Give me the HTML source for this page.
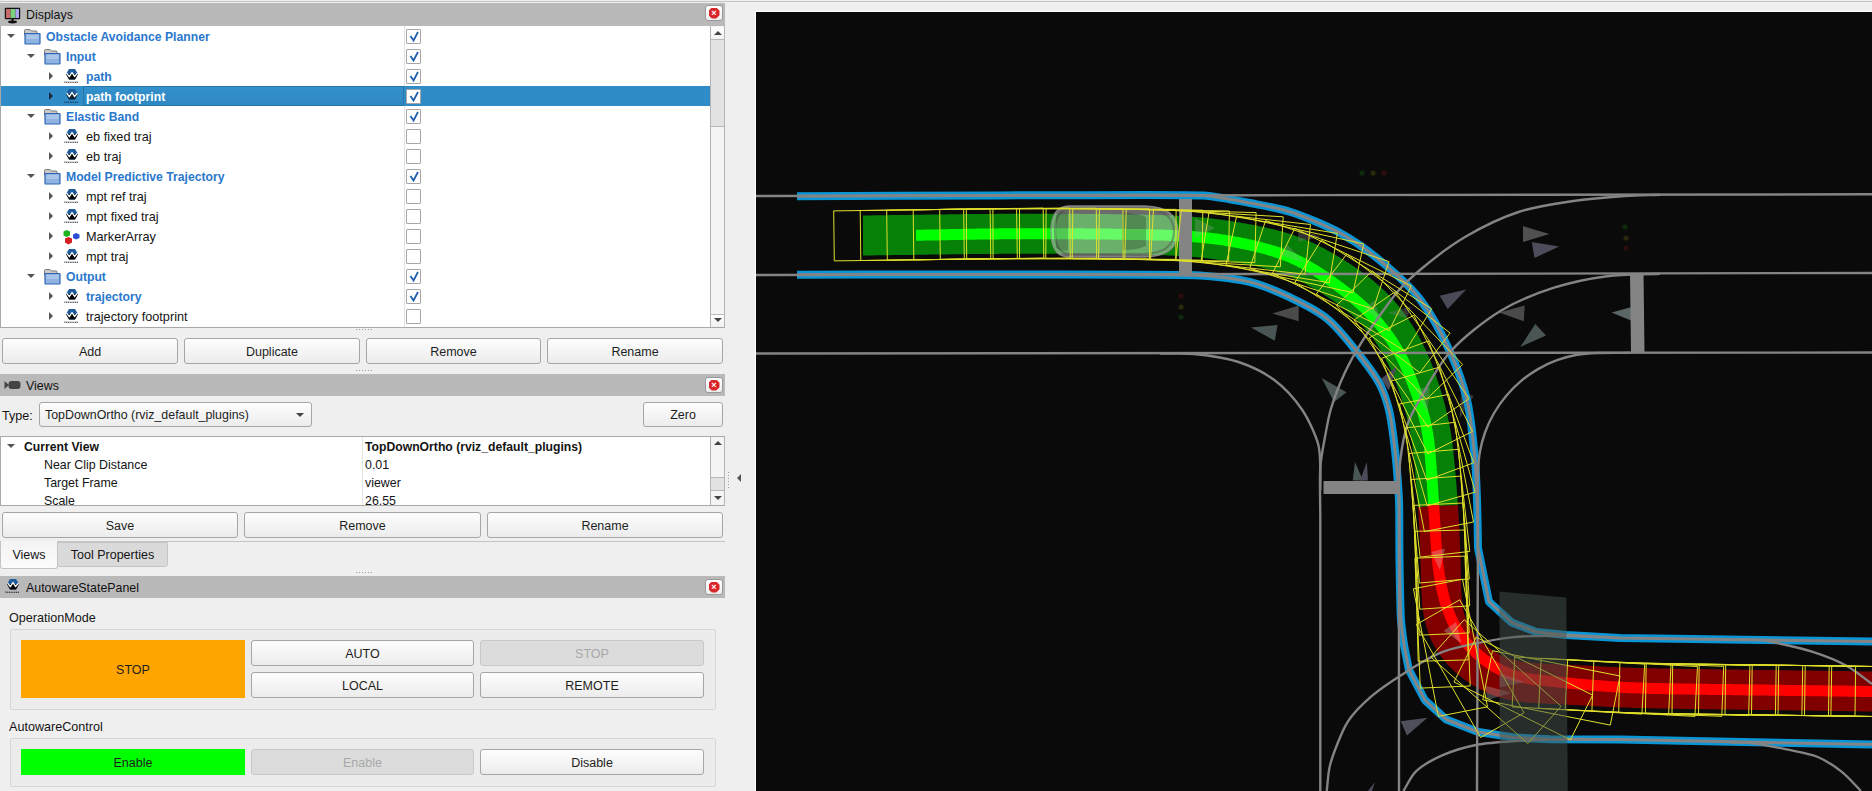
<!DOCTYPE html>
<html><head><meta charset="utf-8">
<style>
*{box-sizing:border-box;margin:0;padding:0}
html,body{width:1872px;height:791px;overflow:hidden;background:#efefef;font-family:"Liberation Sans",sans-serif;font-size:13px;color:#141414}
.a{position:absolute}
.hdr{position:absolute;left:0;width:725px;height:22px;background:#b9b9b9}
.hdr .t{position:absolute;left:26px;top:1px;line-height:22px;font-size:12.5px;color:#111}
.cls{position:absolute;left:705px;width:18px;height:16px;background:linear-gradient(#fff,#ededed);border:1px solid #9a9a9a;border-radius:3px}
.cls i{position:absolute;left:2.5px;top:1.5px;width:11px;height:11px;background:#d8262a;clip-path:polygon(30% 0,70% 0,100% 30%,100% 70%,70% 100%,30% 100%,0 70%,0 30%)}
.cls b{position:absolute;left:4.5px;top:3.5px;width:7px;height:7px;color:#fff;font-size:9px;line-height:7px;text-align:center;font-weight:bold}
.tree{position:absolute;background:#fff}
.row{position:absolute;left:1px;height:20px;width:709px}
.row .tx{position:absolute;top:0;line-height:20px;white-space:nowrap}
.bl{color:#2a78cd;font-weight:bold;font-size:12.2px}
.nm{color:#141414;font-size:12.7px}
.sel{background:#308cc6}
.sel .tx{color:#fff}
.exd{position:absolute;width:0;height:0;border-left:4px solid transparent;border-right:4px solid transparent;border-top:4px solid #555}
.exr{position:absolute;width:0;height:0;border-top:4px solid transparent;border-bottom:4px solid transparent;border-left:4px solid #555}
.cb{position:absolute;left:406px;width:15px;height:15px;background:#fff;border:1px solid #a6a6a6;border-radius:1px}
.btn{position:absolute;height:26px;border:1px solid #a6a6a6;border-radius:3px;background:linear-gradient(#fdfdfd,#ececec);text-align:center;line-height:26px;font-size:12.5px;color:#1e1e1e}
.dis{background:#dcdcdc;border-color:#c8c8c8;color:#a8a8a8}
</style></head><body>

<div class="a" style="left:0;top:1px;width:1872px;height:1px;background:#c4c4c4"></div>
<div class="hdr" style="top:3px;height:23px">
<svg class="a" style="left:4px;top:3.5px" width="17" height="17" viewBox="0 0 17 17"><rect x="0.8" y="0.8" width="15.4" height="11.4" rx="1" fill="#111"/><rect x="2" y="2" width="4.5" height="9" fill="#c86a6a"/><rect x="6.5" y="2" width="5" height="9" fill="#7ed07e"/><rect x="11.5" y="2" width="3.5" height="9" fill="#a8a8f0"/><rect x="7.5" y="12" width="2" height="2" fill="#111"/><ellipse cx="8.5" cy="15" rx="4.5" ry="1.4" fill="#111"/></svg>
<div class="t" style="top:1px;line-height:22px;font-size:12.4px">Displays</div>
</div>
<div class="cls" style="top:5px"><i></i><b>&#215;</b></div>
<div class="tree" style="left:0;top:26px;width:725px;height:302px;border-left:1px solid #a8a8a8;border-bottom:1px solid #a8a8a8"></div>
<div class="a" style="left:404px;top:26px;width:1px;height:301px;background:#e3e3e3"></div>
<div class="exd" style="left:7px;top:34px;border-top-color:#555"></div>
<svg class="a" style="left:24px;top:29px" width="17" height="16" viewBox="0 0 17 16"><path d="M0.5 1.5 Q0.5 0.5 1.5 0.5 H6 L7.5 2 H12 Q13 2 13 3 V6 H0.5Z" fill="#c9c9c9" stroke="#7a7a7a" stroke-width="1"/><path d="M1 4.5 H15.5 Q16 4.5 16 5 V14.5 Q16 15 15.5 15 H1.5 Q1 15 1 14.5Z" fill="#8fb3e0" stroke="#2f66b3" stroke-width="1.2"/><rect x="2.5" y="6" width="12" height="4" fill="#a9c6ea"/></svg>
<div class="a bl" style="left:46px;top:27px;line-height:20px;white-space:nowrap;">Obstacle Avoidance Planner</div>
<div class="cb" style="top:29px"></div>
<svg class="a" style="left:406.5px;top:28.5px" width="15" height="15" viewBox="0 0 15 15"><path d="M3.5 7 L6.5 11.5 L11 3" fill="none" stroke="#1f5fae" stroke-width="1.8"/></svg>
<div class="exd" style="left:27px;top:54px;border-top-color:#555"></div>
<svg class="a" style="left:44px;top:49px" width="17" height="16" viewBox="0 0 17 16"><path d="M0.5 1.5 Q0.5 0.5 1.5 0.5 H6 L7.5 2 H12 Q13 2 13 3 V6 H0.5Z" fill="#c9c9c9" stroke="#7a7a7a" stroke-width="1"/><path d="M1 4.5 H15.5 Q16 4.5 16 5 V14.5 Q16 15 15.5 15 H1.5 Q1 15 1 14.5Z" fill="#8fb3e0" stroke="#2f66b3" stroke-width="1.2"/><rect x="2.5" y="6" width="12" height="4" fill="#a9c6ea"/></svg>
<div class="a bl" style="left:66px;top:47px;line-height:20px;white-space:nowrap;">Input</div>
<div class="cb" style="top:49px"></div>
<svg class="a" style="left:406.5px;top:48.5px" width="15" height="15" viewBox="0 0 15 15"><path d="M3.5 7 L6.5 11.5 L11 3" fill="none" stroke="#1f5fae" stroke-width="1.8"/></svg>
<div class="exr" style="left:49px;top:72px;border-left-color:#555"></div>
<svg class="a" style="left:63px;top:69px" width="17" height="16" viewBox="0 0 17 16"><path d="M6 0 H12 L15 5 L12 10.5 H6 L3 5Z" fill="#1f5a9a"/><path d="M3 5 L15 5 L12 10.5 H6Z" fill="#000"/><path d="M3.6 4.2 L6.3 7.6 L9 3.6 L11.6 7.4 L14.4 4.2" fill="none" stroke="#fff" stroke-width="1.3"/><path d="M1.5 13.5 L2.5 12.2 M3 13.2 H15.5" stroke="#000" stroke-width="1.1" stroke-dasharray="1.2 0.6" opacity="0.85"/></svg>
<div class="a bl" style="left:86px;top:67px;line-height:20px;white-space:nowrap;">path</div>
<div class="cb" style="top:69px"></div>
<svg class="a" style="left:406.5px;top:68.5px" width="15" height="15" viewBox="0 0 15 15"><path d="M3.5 7 L6.5 11.5 L11 3" fill="none" stroke="#1f5fae" stroke-width="1.8"/></svg>
<div class="a" style="left:1px;top:86px;width:709px;height:20px;background:#308cc6"></div>
<div class="a" style="left:83px;top:86px;width:321px;height:20px;border:1px solid #2676ad;background:linear-gradient(#3491cc,#2d87c2)"></div>
<div class="exr" style="left:49px;top:92px;border-left-color:#1a2a3a"></div>
<svg class="a" style="left:63px;top:89px" width="17" height="16" viewBox="0 0 17 16"><path d="M6 0 H12 L15 5 L12 10.5 H6 L3 5Z" fill="#1f5a9a"/><path d="M3 5 L15 5 L12 10.5 H6Z" fill="#0d2236"/><path d="M3.6 4.2 L6.3 7.6 L9 3.6 L11.6 7.4 L14.4 4.2" fill="none" stroke="#fff" stroke-width="1.3"/><path d="M1.5 13.5 L2.5 12.2 M3 13.2 H15.5" stroke="#0d2236" stroke-width="1.1" stroke-dasharray="1.2 0.6" opacity="0.85"/></svg>
<div class="a bl" style="left:86px;top:87px;line-height:20px;white-space:nowrap;color:#fff;">path footprint</div>
<div class="cb" style="top:89px"></div>
<svg class="a" style="left:406.5px;top:88.5px" width="15" height="15" viewBox="0 0 15 15"><path d="M3.5 7 L6.5 11.5 L11 3" fill="none" stroke="#1f5fae" stroke-width="1.8"/></svg>
<div class="exd" style="left:27px;top:114px;border-top-color:#555"></div>
<svg class="a" style="left:44px;top:109px" width="17" height="16" viewBox="0 0 17 16"><path d="M0.5 1.5 Q0.5 0.5 1.5 0.5 H6 L7.5 2 H12 Q13 2 13 3 V6 H0.5Z" fill="#c9c9c9" stroke="#7a7a7a" stroke-width="1"/><path d="M1 4.5 H15.5 Q16 4.5 16 5 V14.5 Q16 15 15.5 15 H1.5 Q1 15 1 14.5Z" fill="#8fb3e0" stroke="#2f66b3" stroke-width="1.2"/><rect x="2.5" y="6" width="12" height="4" fill="#a9c6ea"/></svg>
<div class="a bl" style="left:66px;top:107px;line-height:20px;white-space:nowrap;">Elastic Band</div>
<div class="cb" style="top:109px"></div>
<svg class="a" style="left:406.5px;top:108.5px" width="15" height="15" viewBox="0 0 15 15"><path d="M3.5 7 L6.5 11.5 L11 3" fill="none" stroke="#1f5fae" stroke-width="1.8"/></svg>
<div class="exr" style="left:49px;top:132px;border-left-color:#555"></div>
<svg class="a" style="left:63px;top:129px" width="17" height="16" viewBox="0 0 17 16"><path d="M6 0 H12 L15 5 L12 10.5 H6 L3 5Z" fill="#1f5a9a"/><path d="M3 5 L15 5 L12 10.5 H6Z" fill="#000"/><path d="M3.6 4.2 L6.3 7.6 L9 3.6 L11.6 7.4 L14.4 4.2" fill="none" stroke="#fff" stroke-width="1.3"/><path d="M1.5 13.5 L2.5 12.2 M3 13.2 H15.5" stroke="#000" stroke-width="1.1" stroke-dasharray="1.2 0.6" opacity="0.85"/></svg>
<div class="a nm" style="left:86px;top:127px;line-height:20px;white-space:nowrap;">eb fixed traj</div>
<div class="cb" style="top:129px"></div>
<div class="exr" style="left:49px;top:152px;border-left-color:#555"></div>
<svg class="a" style="left:63px;top:149px" width="17" height="16" viewBox="0 0 17 16"><path d="M6 0 H12 L15 5 L12 10.5 H6 L3 5Z" fill="#1f5a9a"/><path d="M3 5 L15 5 L12 10.5 H6Z" fill="#000"/><path d="M3.6 4.2 L6.3 7.6 L9 3.6 L11.6 7.4 L14.4 4.2" fill="none" stroke="#fff" stroke-width="1.3"/><path d="M1.5 13.5 L2.5 12.2 M3 13.2 H15.5" stroke="#000" stroke-width="1.1" stroke-dasharray="1.2 0.6" opacity="0.85"/></svg>
<div class="a nm" style="left:86px;top:147px;line-height:20px;white-space:nowrap;">eb traj</div>
<div class="cb" style="top:149px"></div>
<div class="exd" style="left:27px;top:174px;border-top-color:#555"></div>
<svg class="a" style="left:44px;top:169px" width="17" height="16" viewBox="0 0 17 16"><path d="M0.5 1.5 Q0.5 0.5 1.5 0.5 H6 L7.5 2 H12 Q13 2 13 3 V6 H0.5Z" fill="#c9c9c9" stroke="#7a7a7a" stroke-width="1"/><path d="M1 4.5 H15.5 Q16 4.5 16 5 V14.5 Q16 15 15.5 15 H1.5 Q1 15 1 14.5Z" fill="#8fb3e0" stroke="#2f66b3" stroke-width="1.2"/><rect x="2.5" y="6" width="12" height="4" fill="#a9c6ea"/></svg>
<div class="a bl" style="left:66px;top:167px;line-height:20px;white-space:nowrap;">Model Predictive Trajectory</div>
<div class="cb" style="top:169px"></div>
<svg class="a" style="left:406.5px;top:168.5px" width="15" height="15" viewBox="0 0 15 15"><path d="M3.5 7 L6.5 11.5 L11 3" fill="none" stroke="#1f5fae" stroke-width="1.8"/></svg>
<div class="exr" style="left:49px;top:192px;border-left-color:#555"></div>
<svg class="a" style="left:63px;top:189px" width="17" height="16" viewBox="0 0 17 16"><path d="M6 0 H12 L15 5 L12 10.5 H6 L3 5Z" fill="#1f5a9a"/><path d="M3 5 L15 5 L12 10.5 H6Z" fill="#000"/><path d="M3.6 4.2 L6.3 7.6 L9 3.6 L11.6 7.4 L14.4 4.2" fill="none" stroke="#fff" stroke-width="1.3"/><path d="M1.5 13.5 L2.5 12.2 M3 13.2 H15.5" stroke="#000" stroke-width="1.1" stroke-dasharray="1.2 0.6" opacity="0.85"/></svg>
<div class="a nm" style="left:86px;top:187px;line-height:20px;white-space:nowrap;">mpt ref traj</div>
<div class="cb" style="top:189px"></div>
<div class="exr" style="left:49px;top:212px;border-left-color:#555"></div>
<svg class="a" style="left:63px;top:209px" width="17" height="16" viewBox="0 0 17 16"><path d="M6 0 H12 L15 5 L12 10.5 H6 L3 5Z" fill="#1f5a9a"/><path d="M3 5 L15 5 L12 10.5 H6Z" fill="#000"/><path d="M3.6 4.2 L6.3 7.6 L9 3.6 L11.6 7.4 L14.4 4.2" fill="none" stroke="#fff" stroke-width="1.3"/><path d="M1.5 13.5 L2.5 12.2 M3 13.2 H15.5" stroke="#000" stroke-width="1.1" stroke-dasharray="1.2 0.6" opacity="0.85"/></svg>
<div class="a nm" style="left:86px;top:207px;line-height:20px;white-space:nowrap;">mpt fixed traj</div>
<div class="cb" style="top:209px"></div>
<div class="exr" style="left:49px;top:232px;border-left-color:#555"></div>
<svg class="a" style="left:63px;top:229px" width="17" height="16" viewBox="0 0 17 16"><path d="M3.5 1 L7 2.5 V6.5 L3.5 8 L0.5 6.5 V2.5Z" fill="#1db31d"/><path d="M13 4 L16.5 5.5 V9 L13 10.5 L10 9 V5.5Z" fill="#2a4fd6"/><path d="M5.5 8 L9 9.5 V13.5 L5.5 15.5 L2 13.5 V9.5Z" fill="#d42020"/></svg>
<div class="a nm" style="left:86px;top:227px;line-height:20px;white-space:nowrap;">MarkerArray</div>
<div class="cb" style="top:229px"></div>
<div class="exr" style="left:49px;top:252px;border-left-color:#555"></div>
<svg class="a" style="left:63px;top:249px" width="17" height="16" viewBox="0 0 17 16"><path d="M6 0 H12 L15 5 L12 10.5 H6 L3 5Z" fill="#1f5a9a"/><path d="M3 5 L15 5 L12 10.5 H6Z" fill="#000"/><path d="M3.6 4.2 L6.3 7.6 L9 3.6 L11.6 7.4 L14.4 4.2" fill="none" stroke="#fff" stroke-width="1.3"/><path d="M1.5 13.5 L2.5 12.2 M3 13.2 H15.5" stroke="#000" stroke-width="1.1" stroke-dasharray="1.2 0.6" opacity="0.85"/></svg>
<div class="a nm" style="left:86px;top:247px;line-height:20px;white-space:nowrap;">mpt traj</div>
<div class="cb" style="top:249px"></div>
<div class="exd" style="left:27px;top:274px;border-top-color:#555"></div>
<svg class="a" style="left:44px;top:269px" width="17" height="16" viewBox="0 0 17 16"><path d="M0.5 1.5 Q0.5 0.5 1.5 0.5 H6 L7.5 2 H12 Q13 2 13 3 V6 H0.5Z" fill="#c9c9c9" stroke="#7a7a7a" stroke-width="1"/><path d="M1 4.5 H15.5 Q16 4.5 16 5 V14.5 Q16 15 15.5 15 H1.5 Q1 15 1 14.5Z" fill="#8fb3e0" stroke="#2f66b3" stroke-width="1.2"/><rect x="2.5" y="6" width="12" height="4" fill="#a9c6ea"/></svg>
<div class="a bl" style="left:66px;top:267px;line-height:20px;white-space:nowrap;">Output</div>
<div class="cb" style="top:269px"></div>
<svg class="a" style="left:406.5px;top:268.5px" width="15" height="15" viewBox="0 0 15 15"><path d="M3.5 7 L6.5 11.5 L11 3" fill="none" stroke="#1f5fae" stroke-width="1.8"/></svg>
<div class="exr" style="left:49px;top:292px;border-left-color:#555"></div>
<svg class="a" style="left:63px;top:289px" width="17" height="16" viewBox="0 0 17 16"><path d="M6 0 H12 L15 5 L12 10.5 H6 L3 5Z" fill="#1f5a9a"/><path d="M3 5 L15 5 L12 10.5 H6Z" fill="#000"/><path d="M3.6 4.2 L6.3 7.6 L9 3.6 L11.6 7.4 L14.4 4.2" fill="none" stroke="#fff" stroke-width="1.3"/><path d="M1.5 13.5 L2.5 12.2 M3 13.2 H15.5" stroke="#000" stroke-width="1.1" stroke-dasharray="1.2 0.6" opacity="0.85"/></svg>
<div class="a bl" style="left:86px;top:287px;line-height:20px;white-space:nowrap;">trajectory</div>
<div class="cb" style="top:289px"></div>
<svg class="a" style="left:406.5px;top:288.5px" width="15" height="15" viewBox="0 0 15 15"><path d="M3.5 7 L6.5 11.5 L11 3" fill="none" stroke="#1f5fae" stroke-width="1.8"/></svg>
<div class="exr" style="left:49px;top:312px;border-left-color:#555"></div>
<svg class="a" style="left:63px;top:309px" width="17" height="16" viewBox="0 0 17 16"><path d="M6 0 H12 L15 5 L12 10.5 H6 L3 5Z" fill="#1f5a9a"/><path d="M3 5 L15 5 L12 10.5 H6Z" fill="#000"/><path d="M3.6 4.2 L6.3 7.6 L9 3.6 L11.6 7.4 L14.4 4.2" fill="none" stroke="#fff" stroke-width="1.3"/><path d="M1.5 13.5 L2.5 12.2 M3 13.2 H15.5" stroke="#000" stroke-width="1.1" stroke-dasharray="1.2 0.6" opacity="0.85"/></svg>
<div class="a nm" style="left:86px;top:307px;line-height:20px;white-space:nowrap;">trajectory footprint</div>
<div class="cb" style="top:309px"></div>
<div class="a" style="left:710px;top:26px;width:15px;height:301px;background:#f4f4f4;border-left:1px solid #b4b4b4;border-right:1px solid #b4b4b4"></div>
<div class="a" style="left:711px;top:27px;width:13px;height:13px;background:linear-gradient(#fff,#f0f0f0)"></div>
<div class="a" style="left:714px;top:31px;width:0;height:0;border-left:4px solid transparent;border-right:4px solid transparent;border-bottom:4px solid #444"></div>
<div class="a" style="left:711px;top:39px;width:13px;height:88px;background:#e2e2e2;border-top:1px solid #b8b8b8;border-bottom:1px solid #b8b8b8"></div>
<div class="a" style="left:711px;top:314px;width:13px;height:13px;background:linear-gradient(#fff,#f0f0f0);border-top:1px solid #b8b8b8"></div>
<div class="a" style="left:714px;top:318px;width:0;height:0;border-left:4px solid transparent;border-right:4px solid transparent;border-top:4px solid #444"></div>
<div class="btn" style="left:2px;top:338px;width:176px">Add</div>
<div class="btn" style="left:184px;top:338px;width:176px">Duplicate</div>
<div class="btn" style="left:366px;top:338px;width:175px">Remove</div>
<div class="btn" style="left:547px;top:338px;width:176px">Rename</div>
<div class="hdr" style="top:374px;height:22px">
<svg class="a" style="left:4px;top:6px" width="17" height="10" viewBox="0 0 17 10"><path d="M0.5 1 L5 5 L0.5 9Z" fill="#444"/><rect x="4.5" y="1" width="12" height="8" rx="3" fill="#444"/></svg>
<div class="t" style="font-size:12.4px">Views</div>
</div>
<div class="cls" style="top:377px"><i></i><b>&#215;</b></div>
<div class="a" style="left:2px;top:406px;line-height:20px;font-size:12.6px">Type:</div>
<div class="btn" style="left:39px;top:402px;width:273px;height:25px;text-align:left;padding-left:5px;font-size:12.4px;line-height:25px">TopDownOrtho (rviz_default_plugins)</div>
<div class="a" style="left:296px;top:413px;width:0;height:0;border-left:4px solid transparent;border-right:4px solid transparent;border-top:4px solid #444"></div>
<div class="btn" style="left:643px;top:402px;width:80px;height:25px;line-height:25px">Zero</div>
<div class="tree" style="left:0;top:436px;width:725px;height:70px;border:1px solid #a8a8a8;border-right:none"></div>
<div class="a" style="left:362px;top:437px;width:1px;height:68px;background:#e3e3e3"></div>
<div class="a" style="left:24px;top:438px;line-height:18px;white-space:nowrap;font-weight:bold;font-size:12.2px;">Current View</div>
<div class="a" style="left:365px;top:438px;line-height:18px;white-space:nowrap;font-weight:bold;font-size:12.2px;">TopDownOrtho (rviz_default_plugins)</div>
<div class="a" style="left:44px;top:456px;line-height:18px;white-space:nowrap;font-size:12.4px;">Near Clip Distance</div>
<div class="a" style="left:365px;top:456px;line-height:18px;white-space:nowrap;font-size:12.4px;">0.01</div>
<div class="a" style="left:44px;top:474px;line-height:18px;white-space:nowrap;font-size:12.4px;">Target Frame</div>
<div class="a" style="left:365px;top:474px;line-height:18px;white-space:nowrap;font-size:12.4px;">viewer</div>
<div class="a" style="left:44px;top:492px;line-height:18px;white-space:nowrap;font-size:12.4px;">Scale</div>
<div class="a" style="left:365px;top:492px;line-height:18px;white-space:nowrap;font-size:12.4px;">26.55</div>
<div class="exd" style="left:7px;top:444px"></div>
<div class="a" style="left:0;top:506px;width:725px;height:6px;background:#efefef"></div>
<div class="a" style="left:0;top:505px;width:725px;height:1px;background:#a8a8a8"></div>
<div class="a" style="left:710px;top:437px;width:15px;height:68px;background:#f4f4f4;border-left:1px solid #b4b4b4;border-right:1px solid #b4b4b4"></div>
<div class="a" style="left:714px;top:441px;width:0;height:0;border-left:4px solid transparent;border-right:4px solid transparent;border-bottom:4px solid #444"></div>
<div class="a" style="left:711px;top:477px;width:13px;height:14px;background:#e2e2e2;border-top:1px solid #b8b8b8;border-bottom:1px solid #b8b8b8"></div>
<div class="a" style="left:714px;top:496px;width:0;height:0;border-left:4px solid transparent;border-right:4px solid transparent;border-top:4px solid #444"></div>
<div class="btn" style="left:2px;top:512px;width:236px">Save</div>
<div class="btn" style="left:244px;top:512px;width:237px">Remove</div>
<div class="btn" style="left:487px;top:512px;width:236px">Rename</div>
<div class="a" style="left:57px;top:541px;width:668px;height:1px;background:#c4c4c4"></div>
<div class="a" style="left:57px;top:542px;width:111px;height:25px;background:#dadada;border:1px solid #c4c4c4;border-radius:0 0 3px 3px;line-height:24px;text-align:center;font-size:12.5px">Tool Properties</div>
<div class="a" style="left:0;top:541px;width:58px;height:28px;background:linear-gradient(#f4f4f4,#fbfbfb);border:1px solid #c4c4c4;border-top:none;border-radius:0 0 3px 3px;line-height:29px;text-align:center;font-size:12.5px">Views</div>
<div class="hdr" style="top:576px;height:22px">
<svg class="a" style="left:4px;top:3px" width="17" height="16" viewBox="0 0 17 16"><path d="M6 0 H12 L15 5 L12 10.5 H6 L3 5Z" fill="#1f5a9a"/><path d="M3 5 L15 5 L12 10.5 H6Z" fill="#000"/><path d="M3.6 4.2 L6.3 7.6 L9 3.6 L11.6 7.4 L14.4 4.2" fill="none" stroke="#fff" stroke-width="1.3"/><path d="M1.5 13.5 L2.5 12.2 M3 13.2 H15.5" stroke="#000" stroke-width="1.1" stroke-dasharray="1.2 0.6" opacity="0.85"/></svg>
<div class="t" style="font-size:12.4px">AutowareStatePanel</div>
</div>
<div class="cls" style="top:579px"><i></i><b>&#215;</b></div>
<div class="a" style="left:9px;top:609px;line-height:18px;font-size:12.6px">OperationMode</div>
<div class="a" style="left:10px;top:629px;width:706px;height:81px;border:1px solid #d6d6d6;border-radius:2px;background:#ececec"></div>
<div class="a" style="left:21px;top:640px;width:224px;height:58px;background:#ffa500;line-height:60px;text-align:center;font-size:12.5px;color:#1e1e1e">STOP</div>
<div class="btn" style="left:251px;top:640px;width:223px">AUTO</div>
<div class="btn" style="left:251px;top:672px;width:223px">LOCAL</div>
<div class="btn dis" style="left:480px;top:640px;width:224px">STOP</div>
<div class="btn" style="left:480px;top:672px;width:224px">REMOTE</div>
<div class="a" style="left:9px;top:718px;line-height:18px;font-size:12.6px">AutowareControl</div>
<div class="a" style="left:10px;top:738px;width:706px;height:49px;border:1px solid #d6d6d6;border-radius:2px;background:#ececec"></div>
<div class="a" style="left:21px;top:749px;width:224px;height:26px;background:#00ff00;line-height:28px;text-align:center;font-size:12.5px;color:#1e1e1e">Enable</div>
<div class="btn dis" style="left:251px;top:749px;width:223px">Enable</div>
<div class="btn" style="left:480px;top:749px;width:224px">Disable</div>
<div class="a" style="left:356px;top:329px;width:1px;height:1px;background:#9a9a9a"></div>
<div class="a" style="left:359px;top:329px;width:1px;height:1px;background:#9a9a9a"></div>
<div class="a" style="left:362px;top:329px;width:1px;height:1px;background:#9a9a9a"></div>
<div class="a" style="left:365px;top:329px;width:1px;height:1px;background:#9a9a9a"></div>
<div class="a" style="left:368px;top:329px;width:1px;height:1px;background:#9a9a9a"></div>
<div class="a" style="left:371px;top:329px;width:1px;height:1px;background:#9a9a9a"></div>
<div class="a" style="left:356px;top:370px;width:1px;height:1px;background:#9a9a9a"></div>
<div class="a" style="left:359px;top:370px;width:1px;height:1px;background:#9a9a9a"></div>
<div class="a" style="left:362px;top:370px;width:1px;height:1px;background:#9a9a9a"></div>
<div class="a" style="left:365px;top:370px;width:1px;height:1px;background:#9a9a9a"></div>
<div class="a" style="left:368px;top:370px;width:1px;height:1px;background:#9a9a9a"></div>
<div class="a" style="left:371px;top:370px;width:1px;height:1px;background:#9a9a9a"></div>
<div class="a" style="left:356px;top:572px;width:1px;height:1px;background:#9a9a9a"></div>
<div class="a" style="left:359px;top:572px;width:1px;height:1px;background:#9a9a9a"></div>
<div class="a" style="left:362px;top:572px;width:1px;height:1px;background:#9a9a9a"></div>
<div class="a" style="left:365px;top:572px;width:1px;height:1px;background:#9a9a9a"></div>
<div class="a" style="left:368px;top:572px;width:1px;height:1px;background:#9a9a9a"></div>
<div class="a" style="left:371px;top:572px;width:1px;height:1px;background:#9a9a9a"></div>
<div class="a" style="left:728px;top:472px;width:1px;height:1px;background:#9a9a9a"></div>
<div class="a" style="left:728px;top:475px;width:1px;height:1px;background:#9a9a9a"></div>
<div class="a" style="left:728px;top:478px;width:1px;height:1px;background:#9a9a9a"></div>
<div class="a" style="left:728px;top:481px;width:1px;height:1px;background:#9a9a9a"></div>
<div class="a" style="left:728px;top:484px;width:1px;height:1px;background:#9a9a9a"></div>
<div class="a" style="left:728px;top:487px;width:1px;height:1px;background:#9a9a9a"></div>
<div class="a" style="left:737px;top:474px;width:0;height:0;border-top:4px solid transparent;border-bottom:4px solid transparent;border-right:4px solid #555"></div>
<div class="a" style="left:755px;top:11px;width:1117px;height:780px;background:#fff"></div>
<div class="a" style="left:756px;top:12px;width:1116px;height:779px;background:#0a0a0a;overflow:hidden">
<svg class="a" style="left:-756px;top:-12px" width="1872" height="791" viewBox="0 0 1872 791">
<circle cx="1362" cy="173" r="2.6" fill="#0e2a0e"/>
<circle cx="1373" cy="173" r="2.6" fill="#2a280a"/>
<circle cx="1384" cy="173" r="2.6" fill="#2a0e0e"/>
<circle cx="1625" cy="227" r="2.6" fill="#0e2a0e"/>
<circle cx="1626" cy="238" r="2.6" fill="#2a280a"/>
<circle cx="1626" cy="248" r="2.6" fill="#2a0e0e"/>
<circle cx="1181" cy="296" r="2.6" fill="#2a0e0e"/>
<circle cx="1181" cy="307" r="2.6" fill="#2a280a"/>
<circle cx="1181" cy="317" r="2.6" fill="#0e2a0e"/>
<path d="M863.0 235.5 L865.0 235.5 L867.0 235.4 L869.0 235.4 L871.0 235.4 L873.0 235.4 L875.0 235.3 L877.0 235.3 L879.0 235.3 L881.0 235.3 L883.0 235.2 L885.0 235.2 L887.0 235.2 L889.0 235.2 L891.0 235.1 L893.0 235.1 L895.0 235.1 L897.0 235.0 L899.0 235.0 L901.0 235.0 L903.0 235.0 L905.0 234.9 L907.0 234.9 L909.0 234.9 L911.0 234.9 L913.0 234.8 L915.0 234.8 L917.0 234.8 L919.0 234.7 L921.0 234.7 L923.0 234.7 L925.0 234.7 L927.0 234.6 L929.0 234.6 L931.0 234.6 L933.0 234.6 L935.0 234.5 L937.0 234.5 L939.0 234.5 L941.0 234.4 L943.0 234.4 L945.0 234.4 L947.0 234.4 L949.1 234.3 L951.1 234.3 L953.1 234.3 L955.1 234.3 L957.1 234.2 L959.1 234.2 L961.1 234.2 L963.1 234.2 L965.1 234.1 L967.1 234.1 L969.1 234.1 L971.1 234.1 L973.1 234.1 L975.1 234.0 L977.1 234.0 L979.1 234.0 L981.1 234.0 L983.1 234.0 L985.1 233.9 L987.1 233.9 L989.1 233.9 L991.1 233.9 L993.1 233.9 L995.1 233.9 L997.1 233.9 L999.1 233.8 L1001.1 233.8 L1003.1 233.8 L1005.1 233.8 L1007.1 233.8 L1009.1 233.8 L1011.1 233.8 L1013.1 233.8 L1015.1 233.8 L1017.1 233.8 L1019.1 233.7 L1021.1 233.7 L1023.1 233.7 L1025.1 233.7 L1027.1 233.7 L1029.1 233.7 L1031.1 233.7 L1033.1 233.7 L1035.1 233.7 L1037.1 233.7 L1039.1 233.7 L1041.1 233.7 L1043.1 233.7 L1045.1 233.7 L1047.1 233.7 L1049.1 233.7 L1051.1 233.7 L1053.1 233.7 L1055.1 233.7 L1057.1 233.7 L1059.1 233.7 L1061.1 233.7 L1063.1 233.8 L1065.1 233.8 L1067.1 233.8 L1069.1 233.8 L1071.1 233.8 L1073.1 233.8 L1075.1 233.8 L1077.1 233.8 L1079.1 233.8 L1081.1 233.9 L1083.1 233.9 L1085.1 233.9 L1087.1 233.9 L1089.1 233.9 L1091.1 233.9 L1093.1 234.0 L1095.1 234.0 L1097.1 234.0 L1099.1 234.0 L1101.2 234.0 L1103.2 234.1 L1105.2 234.1 L1107.2 234.1 L1109.2 234.1 L1111.2 234.2 L1113.2 234.2 L1115.2 234.2 L1117.2 234.2 L1119.2 234.3 L1121.2 234.3 L1123.2 234.3 L1125.2 234.4 L1127.2 234.4 L1129.2 234.4 L1131.2 234.5 L1133.2 234.5 L1135.2 234.5 L1137.2 234.6 L1139.2 234.6 L1141.2 234.6 L1143.2 234.7 L1145.2 234.7 L1147.2 234.8 L1149.2 234.8 L1151.2 234.9 L1153.2 234.9 L1155.2 235.0 L1157.2 235.0 L1159.2 235.1 L1161.2 235.1 L1163.2 235.2 L1165.2 235.3 L1167.2 235.3 L1169.2 235.4 L1171.2 235.5 L1173.2 235.6 L1175.2 235.7 L1177.2 235.8 L1179.2 235.9 L1181.2 236.0 L1183.2 236.1 L1185.2 236.2 L1187.2 236.3 L1189.1 236.5 L1191.1 236.6 L1193.1 236.8 L1195.1 237.0 L1197.1 237.1 L1199.1 237.3 L1201.1 237.5 L1203.1 237.7 L1205.1 237.9 L1207.1 238.1 L1209.1 238.3 L1211.0 238.6 L1213.0 238.8 L1215.0 239.1 L1217.0 239.3 L1219.0 239.6 L1221.0 239.9 L1222.9 240.2 L1224.9 240.4 L1226.9 240.7 L1228.9 241.0 L1230.8 241.4 L1232.8 241.7 L1234.8 242.0 L1236.8 242.3 L1238.7 242.7 L1240.7 243.0 L1242.7 243.3 L1244.6 243.7 L1246.6 244.1 L1248.6 244.4 L1250.5 244.8 L1252.5 245.2 L1254.5 245.6 L1256.4 246.0 L1258.4 246.4 L1260.3 246.8 L1262.3 247.3 L1264.2 247.7 L1266.2 248.2 L1268.1 248.6 L1270.1 249.1 L1272.0 249.6 L1273.9 250.1 L1275.8 250.6 L1277.8 251.2 L1279.7 251.7 L1281.6 252.3 L1283.5 252.9 L1285.4 253.5 L1287.2 254.1 L1289.1 254.8 L1291.0 255.5 L1292.9 256.2 L1294.7 256.9 L1296.6 257.6 L1298.4 258.4 L1300.2 259.2 L1302.0 260.0 L1303.8 260.8 L1305.7 261.6 L1307.4 262.5 L1309.2 263.4 L1311.0 264.3 L1312.8 265.2 L1314.6 266.1 L1316.3 267.0 L1318.1 268.0 L1319.8 269.0 L1321.5 269.9 L1323.3 270.9 L1325.0 271.9 L1326.7 273.0 L1328.4 274.0 L1330.1 275.0 L1331.8 276.1 L1333.5 277.1 L1335.2 278.2 L1336.9 279.3 L1338.6 280.3 L1340.3 281.4 L1341.9 282.5 L1343.6 283.7 L1345.2 284.8 L1346.9 285.9 L1348.5 287.1 L1350.1 288.2 L1351.7 289.4 L1353.3 290.6 L1354.9 291.8 L1356.5 293.0 L1358.1 294.2 L1359.6 295.5 L1361.2 296.7 L1362.7 298.0 L1364.2 299.3 L1365.7 300.6 L1367.2 301.9 L1368.6 303.3 L1370.1 304.6 L1371.5 306.0 L1372.9 307.4 L1374.3 308.8 L1375.7 310.3 L1377.0 311.7 L1378.4 313.2 L1379.7 314.7 L1381.0 316.2 L1382.2 317.7 L1383.5 319.2 L1384.7 320.8 L1385.9 322.4 L1387.1 324.0 L1388.3 325.6 L1389.5 327.2 L1390.6 328.8 L1391.7 330.4 L1392.9 332.1 L1393.9 333.8 L1395.0 335.4 L1396.1 337.1 L1397.1 338.8 L1398.1 340.5 L1399.1 342.2 L1400.1 344.0 L1401.1 345.7 L1402.1 347.5 L1403.0 349.2 L1403.9 351.0 L1404.8 352.8 L1405.7 354.5 L1406.6 356.3 L1407.4 358.1 L1408.2 359.9 L1409.1 361.8 L1409.9 363.6 L1410.6 365.4 L1411.4 367.3 L1412.2 369.1 L1412.9 371.0 L1413.6 372.8 L1414.3 374.7 L1415.0 376.6 L1415.7 378.4 L1416.4 380.3 L1417.1 382.2 L1417.7 384.1 L1418.3 386.0 L1419.0 387.9 L1419.6 389.8 L1420.2 391.7 L1420.8 393.6 L1421.4 395.5 L1422.0 397.4 L1422.6 399.3 L1423.1 401.2 L1423.7 403.2 L1424.2 405.1 L1424.7 407.0 L1425.3 408.9 L1425.8 410.9 L1426.3 412.8 L1426.7 414.7 L1427.2 416.7 L1427.7 418.6 L1428.1 420.6 L1428.5 422.5 L1429.0 424.5 L1429.4 426.4 L1429.7 428.4 L1430.1 430.3 L1430.5 432.3 L1430.8 434.3 L1431.1 436.2 L1431.4 438.2 L1431.7 440.2 L1432.0 442.2 L1432.3 444.1 L1432.6 446.1 L1432.8 448.1 L1433.1 450.1 L1433.3 452.1 L1433.5 454.1 L1433.7 456.0 L1433.9 458.0 L1434.1 460.0 L1434.3 462.0 L1434.5 464.0 L1434.7 466.0 L1434.9 468.0 L1435.1 470.0 L1435.2 472.0 L1435.4 474.0 L1435.6 476.0 L1435.8 478.0 L1435.9 479.9 L1436.1 481.9 L1436.3 483.9 L1436.4 485.9 L1436.6 487.9 L1436.7 489.9 L1436.9 491.9 L1437.0 493.9 L1437.2 495.9 L1437.3 497.9 L1437.5 499.9 L1437.6 501.9 L1437.8 503.9 L1437.9 505.9" fill="none" stroke="#078007" stroke-width="40"/>
<path d="M1437.9 505.9 L1438.0 507.9 L1438.2 509.9 L1438.3 511.9 L1438.4 513.9 L1438.6 515.9 L1438.7 517.9 L1438.8 519.9 L1438.9 521.9 L1439.0 523.9 L1439.1 525.9 L1439.2 527.9 L1439.3 529.9 L1439.4 531.9 L1439.5 533.9 L1439.6 535.9 L1439.7 537.9 L1439.8 539.9 L1439.9 541.8 L1439.9 543.8 L1440.0 545.8 L1440.1 547.8 L1440.2 549.8 L1440.2 551.8 L1440.3 553.8 L1440.3 555.8 L1440.4 557.8 L1440.5 559.8 L1440.5 561.8 L1440.6 563.8 L1440.6 565.8 L1440.6 567.8 L1440.7 569.8 L1440.7 571.8 L1440.8 573.8 L1440.8 575.8 L1440.9 577.8 L1440.9 579.8 L1441.0 581.8 L1441.0 583.8 L1441.1 585.8 L1441.2 587.8 L1441.2 589.8 L1441.3 591.8 L1441.4 593.8 L1441.6 595.8 L1441.7 597.8 L1441.9 599.7 L1442.0 601.7 L1442.2 603.7 L1442.5 605.6 L1442.7 607.6 L1443.0 609.5 L1443.3 611.5 L1443.7 613.4 L1444.1 615.3 L1444.5 617.2 L1445.0 619.1 L1445.5 621.0 L1446.1 622.8 L1446.7 624.7 L1447.3 626.5 L1448.0 628.3 L1448.7 630.1 L1449.5 631.9 L1450.4 633.6 L1451.2 635.3 L1452.2 637.0 L1453.1 638.7 L1454.1 640.3 L1455.2 641.9 L1456.3 643.5 L1457.4 645.1 L1458.6 646.6 L1459.8 648.1 L1461.1 649.6 L1462.4 651.1 L1463.7 652.5 L1465.1 653.9 L1466.5 655.2 L1467.9 656.6 L1469.4 657.9 L1470.9 659.2 L1472.4 660.4 L1473.9 661.7 L1475.5 662.8 L1477.1 664.0 L1478.7 665.1 L1480.3 666.2 L1481.9 667.3 L1483.6 668.4 L1485.3 669.4 L1487.0 670.3 L1488.7 671.3 L1490.5 672.2 L1492.2 673.1 L1494.0 673.9 L1495.8 674.7 L1497.6 675.5 L1499.4 676.2 L1501.2 676.9 L1503.1 677.5 L1504.9 678.1 L1506.8 678.7 L1508.7 679.2 L1510.6 679.7 L1512.5 680.1 L1514.4 680.6 L1516.3 680.9 L1518.3 681.3 L1520.2 681.6 L1522.2 681.9 L1524.1 682.1 L1526.1 682.4 L1528.1 682.6 L1530.0 682.8 L1532.0 682.9 L1534.0 683.1 L1536.0 683.2 L1538.0 683.3 L1540.0 683.4 L1541.9 683.5 L1543.9 683.6 L1545.9 683.7 L1547.9 683.8 L1549.9 683.9 L1551.9 684.0 L1553.9 684.1 L1555.9 684.1 L1557.9 684.2 L1559.9 684.3 L1561.9 684.4 L1563.9 684.5 L1565.9 684.6 L1567.9 684.7 L1569.9 684.8 L1571.9 684.9 L1573.9 685.0 L1575.9 685.1 L1577.9 685.2 L1579.9 685.3 L1581.9 685.4 L1583.9 685.5 L1585.9 685.6 L1587.9 685.7 L1589.9 685.9 L1591.9 686.0 L1593.9 686.1 L1595.9 686.2 L1597.9 686.3 L1599.9 686.4 L1601.9 686.5 L1603.9 686.6 L1605.9 686.7 L1607.9 686.8 L1609.9 686.9 L1611.9 687.0 L1613.9 687.1 L1615.9 687.2 L1617.9 687.2 L1619.9 687.3 L1621.9 687.4 L1623.9 687.5 L1625.9 687.6 L1627.9 687.6 L1629.9 687.7 L1631.9 687.8 L1633.9 687.8 L1635.9 687.9 L1637.9 687.9 L1639.9 688.0 L1641.9 688.0 L1643.9 688.1 L1645.9 688.1 L1647.9 688.2 L1649.9 688.2 L1651.9 688.3 L1653.9 688.3 L1655.9 688.4 L1657.9 688.4 L1659.9 688.4 L1661.9 688.5 L1663.9 688.5 L1665.9 688.6 L1667.9 688.6 L1669.9 688.6 L1671.9 688.7 L1673.9 688.7 L1675.9 688.7 L1677.9 688.8 L1679.9 688.8 L1681.9 688.8 L1683.9 688.9 L1685.9 688.9 L1687.9 688.9 L1689.9 688.9 L1691.9 689.0 L1693.9 689.0 L1695.9 689.0 L1697.9 689.1 L1699.9 689.1 L1701.9 689.1 L1703.9 689.2 L1705.9 689.2 L1707.9 689.2 L1709.9 689.2 L1711.9 689.3 L1713.9 689.3 L1715.9 689.3 L1717.9 689.4 L1719.9 689.4 L1721.9 689.4 L1723.9 689.4 L1725.9 689.5 L1727.9 689.5 L1729.9 689.5 L1731.9 689.6 L1733.9 689.6 L1735.9 689.6 L1737.9 689.6 L1739.9 689.7 L1741.9 689.7 L1743.9 689.7 L1745.9 689.7 L1747.9 689.8 L1749.9 689.8 L1751.9 689.8 L1753.9 689.9 L1755.9 689.9 L1757.9 689.9 L1759.9 689.9 L1761.9 690.0 L1763.9 690.0 L1765.9 690.0 L1767.9 690.0 L1769.9 690.1 L1771.9 690.1 L1773.9 690.1 L1775.9 690.2 L1777.9 690.2 L1779.9 690.2 L1781.9 690.2 L1783.9 690.3 L1785.9 690.3 L1788.0 690.3 L1790.0 690.3 L1792.0 690.4 L1794.0 690.4 L1796.0 690.4 L1798.0 690.5 L1800.0 690.5 L1802.0 690.5 L1804.0 690.5 L1806.0 690.6 L1808.0 690.6 L1810.0 690.6 L1812.0 690.6 L1814.0 690.7 L1816.0 690.7 L1818.0 690.7 L1820.0 690.8 L1822.0 690.8 L1824.0 690.8 L1826.0 690.8 L1828.0 690.9 L1830.0 690.9 L1832.0 690.9 L1834.0 691.0 L1836.0 691.0 L1838.0 691.0 L1840.0 691.0 L1842.0 691.1 L1844.0 691.1 L1846.0 691.1 L1848.0 691.2 L1850.0 691.2 L1852.0 691.2 L1854.0 691.2 L1856.0 691.3 L1858.0 691.3 L1860.0 691.3 L1862.0 691.4 L1864.0 691.4 L1866.0 691.4 L1868.0 691.4 L1870.0 691.5 L1872.0 691.5" fill="none" stroke="#800000" stroke-width="40"/>
<path d="M916.0 235.3 L918.0 235.3 L920.0 235.2 L922.0 235.2 L924.0 235.1 L926.0 235.1 L928.0 235.1 L930.0 235.0 L932.0 235.0 L934.0 234.9 L936.0 234.9 L938.0 234.9 L940.0 234.8 L942.0 234.8 L944.0 234.7 L946.0 234.7 L948.0 234.7 L950.0 234.6 L952.0 234.6 L954.0 234.5 L956.0 234.5 L958.0 234.5 L960.1 234.4 L962.1 234.4 L964.1 234.3 L966.1 234.3 L968.1 234.3 L970.1 234.2 L972.1 234.2 L974.1 234.2 L976.1 234.1 L978.1 234.1 L980.1 234.1 L982.1 234.0 L984.1 234.0 L986.1 234.0 L988.1 234.0 L990.1 233.9 L992.1 233.9 L994.1 233.9 L996.1 233.9 L998.1 233.9 L1000.1 233.8 L1002.1 233.8 L1004.1 233.8 L1006.1 233.8 L1008.1 233.8 L1010.1 233.8 L1012.1 233.8 L1014.1 233.7 L1016.1 233.7 L1018.1 233.7 L1020.1 233.7 L1022.1 233.7 L1024.1 233.7 L1026.1 233.7 L1028.1 233.7 L1030.1 233.7 L1032.1 233.7 L1034.1 233.7 L1036.1 233.7 L1038.2 233.7 L1040.2 233.7 L1042.2 233.7 L1044.2 233.7 L1046.2 233.7 L1048.2 233.7 L1050.2 233.7 L1052.2 233.7 L1054.2 233.7 L1056.2 233.7 L1058.2 233.7 L1060.2 233.7 L1062.2 233.7 L1064.2 233.7 L1066.2 233.7 L1068.2 233.8 L1070.2 233.8 L1072.2 233.8 L1074.2 233.8 L1076.2 233.8 L1078.2 233.8 L1080.2 233.8 L1082.2 233.8 L1084.2 233.9 L1086.2 233.9 L1088.2 233.9 L1090.2 233.9 L1092.2 233.9 L1094.2 234.0 L1096.2 234.0 L1098.2 234.0 L1100.2 234.0 L1102.2 234.0 L1104.2 234.1 L1106.2 234.1 L1108.2 234.1 L1110.2 234.1 L1112.3 234.2 L1114.3 234.2 L1116.3 234.2 L1118.3 234.3 L1120.3 234.3 L1122.3 234.3 L1124.3 234.3 L1126.3 234.4 L1128.3 234.4 L1130.3 234.4 L1132.3 234.5 L1134.3 234.5 L1136.3 234.5 L1138.3 234.6 L1140.3 234.6 L1142.3 234.6 L1144.3 234.7 L1146.3 234.7 L1148.3 234.8 L1150.3 234.8 L1152.3 234.8 L1154.3 234.9 L1156.3 234.9 L1158.3 235.0 L1160.3 235.0 L1162.3 235.1 L1164.3 235.2 L1166.3 235.2 L1168.3 235.3 L1170.3 235.4 L1172.3 235.4 L1174.3 235.5 L1176.3 235.6 L1178.3 235.7 L1180.3 235.8 L1182.3 235.9 L1184.3 236.0 L1186.3 236.1 L1188.3 236.3 L1190.3 236.4 L1192.3 236.5 L1194.3 236.7 L1196.3 236.9 L1198.3 237.0 L1200.3 237.2 L1202.3 237.4 L1204.3 237.6 L1206.3 237.8 L1208.2 238.0 L1210.2 238.3 L1212.2 238.5 L1214.2 238.8 L1216.2 239.0 L1218.2 239.3 L1220.2 239.6 L1222.1 239.9 L1224.1 240.1 L1226.1 240.5 L1228.1 240.8 L1230.0 241.1 L1232.0 241.4 L1234.0 241.8 L1235.9 242.2 L1237.9 242.5 L1239.9 242.9 L1241.8 243.3 L1243.8 243.7 L1245.8 244.1 L1247.7 244.5 L1249.7 245.0 L1251.6 245.4 L1253.6 245.8 L1255.5 246.3 L1257.5 246.8 L1259.4 247.2 L1261.3 247.7 L1263.3 248.2 L1265.2 248.8 L1267.1 249.3 L1269.1 249.8 L1271.0 250.4 L1272.9 251.0 L1274.8 251.6 L1276.7 252.2 L1278.6 252.8 L1280.5 253.4 L1282.4 254.1 L1284.2 254.8 L1286.1 255.5 L1287.9 256.2 L1289.8 257.0 L1291.6 257.8 L1293.4 258.6 L1295.2 259.4 L1297.0 260.3 L1298.8 261.2 L1300.6 262.1 L1302.4 263.0 L1304.1 263.9 L1305.9 264.9 L1307.6 265.9 L1309.3 266.9 L1311.0 267.9 L1312.7 269.0 L1314.4 270.0 L1316.1 271.1 L1317.8 272.1 L1319.5 273.2 L1321.2 274.3 L1322.8 275.4 L1324.5 276.6 L1326.2 277.7 L1327.8 278.8 L1329.5 279.9 L1331.1 281.1 L1332.7 282.3 L1334.4 283.4 L1336.0 284.6 L1337.6 285.8 L1339.2 287.0 L1340.8 288.1 L1342.4 289.4 L1344.0 290.6 L1345.6 291.8 L1347.2 293.0 L1348.7 294.3 L1350.3 295.5 L1351.8 296.8 L1353.4 298.0 L1354.9 299.3 L1356.4 300.6 L1357.9 301.9 L1359.4 303.3 L1360.9 304.6 L1362.4 306.0 L1363.8 307.3 L1365.3 308.7 L1366.7 310.1 L1368.1 311.5 L1369.5 312.9 L1370.9 314.4 L1372.2 315.9 L1373.6 317.3 L1374.9 318.8 L1376.2 320.3 L1377.5 321.8 L1378.8 323.4 L1380.1 324.9 L1381.3 326.5 L1382.6 328.0 L1383.8 329.6 L1385.0 331.2 L1386.2 332.8 L1387.4 334.4 L1388.5 336.0 L1389.7 337.6 L1390.8 339.3 L1391.9 340.9 L1393.0 342.6 L1394.1 344.3 L1395.2 346.0 L1396.2 347.7 L1397.2 349.4 L1398.2 351.1 L1399.2 352.9 L1400.2 354.6 L1401.1 356.4 L1402.0 358.1 L1402.9 359.9 L1403.8 361.7 L1404.6 363.5 L1405.4 365.3 L1406.2 367.2 L1407.0 369.0 L1407.8 370.8 L1408.6 372.7 L1409.3 374.5 L1410.0 376.4 L1410.8 378.2 L1411.5 380.1 L1412.2 382.0 L1412.9 383.8 L1413.6 385.7 L1414.3 387.6 L1415.0 389.5 L1415.7 391.3 L1416.4 393.2 L1417.1 395.1 L1417.7 397.0 L1418.4 398.9 L1419.1 400.8 L1419.7 402.6 L1420.4 404.5 L1421.0 406.4 L1421.6 408.3 L1422.2 410.2 L1422.8 412.1 L1423.3 414.1 L1423.9 416.0 L1424.4 417.9 L1424.9 419.8 L1425.3 421.8 L1425.8 423.7 L1426.2 425.7 L1426.6 427.6 L1426.9 429.6 L1427.3 431.5 L1427.6 433.5 L1427.9 435.5 L1428.2 437.5 L1428.5 439.4 L1428.7 441.4 L1429.0 443.4 L1429.2 445.4 L1429.4 447.4 L1429.6 449.4 L1429.8 451.4 L1430.0 453.3 L1430.2 455.3 L1430.4 457.3 L1430.5 459.3 L1430.7 461.3 L1430.9 463.3 L1431.0 465.3 L1431.2 467.3 L1431.3 469.3 L1431.5 471.3 L1431.6 473.3 L1431.7 475.3 L1431.9 477.3 L1432.0 479.3 L1432.1 481.3 L1432.3 483.3 L1432.4 485.3 L1432.5 487.3 L1432.7 489.3 L1432.8 491.3 L1432.9 493.3 L1433.0 495.3 L1433.2 497.3 L1433.3 499.3 L1433.4 501.3 L1433.5 503.3 L1433.7 505.3" fill="none" stroke="#00ff00" stroke-width="11"/>
<path d="M1433.7 505.3 L1433.8 507.3 L1433.9 509.3 L1434.1 511.3 L1434.2 513.3 L1434.3 515.3 L1434.4 517.3 L1434.6 519.3 L1434.7 521.3 L1434.8 523.3 L1435.0 525.3 L1435.1 527.3 L1435.2 529.3 L1435.3 531.3 L1435.5 533.3 L1435.6 535.3 L1435.7 537.3 L1435.8 539.3 L1436.0 541.3 L1436.1 543.3 L1436.2 545.2 L1436.4 547.2 L1436.5 549.2 L1436.7 551.2 L1436.8 553.2 L1437.0 555.2 L1437.2 557.2 L1437.4 559.2 L1437.6 561.2 L1437.8 563.2 L1438.0 565.2 L1438.2 567.1 L1438.5 569.1 L1438.8 571.1 L1439.1 573.1 L1439.4 575.1 L1439.7 577.0 L1440.0 579.0 L1440.4 581.0 L1440.7 582.9 L1441.1 584.9 L1441.5 586.9 L1441.9 588.8 L1442.4 590.8 L1442.8 592.7 L1443.3 594.6 L1443.8 596.6 L1444.3 598.5 L1444.8 600.4 L1445.4 602.3 L1446.0 604.3 L1446.5 606.2 L1447.2 608.0 L1447.8 609.9 L1448.5 611.8 L1449.2 613.6 L1449.9 615.5 L1450.7 617.3 L1451.5 619.1 L1452.3 620.9 L1453.2 622.7 L1454.1 624.5 L1455.0 626.2 L1456.0 627.9 L1457.0 629.6 L1458.0 631.3 L1459.1 633.0 L1460.2 634.6 L1461.4 636.2 L1462.5 637.8 L1463.7 639.4 L1465.0 640.9 L1466.2 642.5 L1467.5 644.0 L1468.8 645.4 L1470.2 646.9 L1471.6 648.3 L1473.0 649.7 L1474.4 651.1 L1475.8 652.5 L1477.3 653.8 L1478.8 655.1 L1480.3 656.4 L1481.8 657.7 L1483.4 658.9 L1485.0 660.1 L1486.5 661.3 L1488.2 662.5 L1489.8 663.6 L1491.4 664.7 L1493.1 665.7 L1494.8 666.8 L1496.5 667.8 L1498.2 668.7 L1500.0 669.6 L1501.7 670.5 L1503.5 671.3 L1505.3 672.1 L1507.2 672.9 L1509.0 673.6 L1510.8 674.3 L1512.7 674.9 L1514.6 675.5 L1516.5 676.0 L1518.4 676.5 L1520.3 677.0 L1522.2 677.4 L1524.2 677.8 L1526.1 678.2 L1528.1 678.6 L1530.1 678.9 L1532.0 679.2 L1534.0 679.5 L1536.0 679.7 L1538.0 680.0 L1539.9 680.2 L1541.9 680.4 L1543.9 680.6 L1545.9 680.8 L1547.9 681.0 L1549.9 681.2 L1551.9 681.4 L1553.9 681.6 L1555.9 681.8 L1557.9 682.0 L1559.8 682.2 L1561.8 682.4 L1563.8 682.6 L1565.8 682.8 L1567.8 683.0 L1569.8 683.2 L1571.8 683.4 L1573.8 683.6 L1575.8 683.8 L1577.8 683.9 L1579.8 684.1 L1581.8 684.3 L1583.8 684.5 L1585.8 684.7 L1587.8 684.9 L1589.7 685.0 L1591.7 685.2 L1593.7 685.4 L1595.7 685.5 L1597.7 685.7 L1599.7 685.8 L1601.7 686.0 L1603.7 686.1 L1605.7 686.3 L1607.7 686.4 L1609.7 686.6 L1611.7 686.7 L1613.7 686.8 L1615.7 686.9 L1617.7 687.1 L1619.7 687.2 L1621.7 687.3 L1623.7 687.4 L1625.7 687.5 L1627.7 687.6 L1629.7 687.7 L1631.7 687.8 L1633.7 687.8 L1635.7 687.9 L1637.7 688.0 L1639.7 688.1 L1641.7 688.1 L1643.7 688.2 L1645.7 688.2 L1647.7 688.3 L1649.7 688.4 L1651.7 688.4 L1653.7 688.5 L1655.7 688.5 L1657.7 688.5 L1659.7 688.6 L1661.7 688.6 L1663.7 688.7 L1665.7 688.7 L1667.7 688.7 L1669.7 688.8 L1671.7 688.8 L1673.7 688.8 L1675.7 688.9 L1677.8 688.9 L1679.8 688.9 L1681.8 689.0 L1683.8 689.0 L1685.8 689.0 L1687.8 689.1 L1689.8 689.1 L1691.8 689.1 L1693.8 689.2 L1695.8 689.2 L1697.8 689.2 L1699.8 689.2 L1701.8 689.3 L1703.8 689.3 L1705.8 689.3 L1707.8 689.3 L1709.8 689.4 L1711.8 689.4 L1713.8 689.4 L1715.8 689.5 L1717.8 689.5 L1719.8 689.5 L1721.8 689.5 L1723.8 689.6 L1725.8 689.6 L1727.8 689.6 L1729.8 689.6 L1731.8 689.7 L1733.8 689.7 L1735.8 689.7 L1737.8 689.7 L1739.8 689.8 L1741.8 689.8 L1743.8 689.8 L1745.8 689.9 L1747.8 689.9 L1749.8 689.9 L1751.8 689.9 L1753.8 690.0 L1755.9 690.0 L1757.9 690.0 L1759.9 690.0 L1761.9 690.1 L1763.9 690.1 L1765.9 690.1 L1767.9 690.1 L1769.9 690.2 L1771.9 690.2 L1773.9 690.2 L1775.9 690.2 L1777.9 690.3 L1779.9 690.3 L1781.9 690.3 L1783.9 690.3 L1785.9 690.4 L1787.9 690.4 L1789.9 690.4 L1791.9 690.4 L1793.9 690.5 L1795.9 690.5 L1797.9 690.5 L1799.9 690.5 L1801.9 690.6 L1803.9 690.6 L1805.9 690.6 L1807.9 690.6 L1809.9 690.7 L1811.9 690.7 L1813.9 690.7 L1815.9 690.7 L1817.9 690.8 L1819.9 690.8 L1821.9 690.8 L1823.9 690.8 L1825.9 690.9 L1827.9 690.9 L1829.9 690.9 L1831.9 690.9 L1834.0 691.0 L1836.0 691.0 L1838.0 691.0 L1840.0 691.1 L1842.0 691.1 L1844.0 691.1 L1846.0 691.1 L1848.0 691.2 L1850.0 691.2 L1852.0 691.2 L1854.0 691.2 L1856.0 691.3 L1858.0 691.3 L1860.0 691.3 L1862.0 691.4 L1864.0 691.4 L1866.0 691.4 L1868.0 691.4 L1870.0 691.5 L1872.0 691.5" fill="none" stroke="#ff0000" stroke-width="11"/>
<polygon points="1523,226.1 1549.5,234.1 1523,242.1" fill="#505050" fill-opacity="1"/>
<polygon points="1531.8,242.1 1559.2,246.5 1534.5,258" fill="#4c4c5a" fill-opacity="1"/>
<polygon points="1439.7,295.7 1466.3,289.5 1447.7,309" fill="#4a4a56" fill-opacity="1"/>
<polygon points="1499,312.5 1524.7,305.4 1523.8,321.3" fill="#4a4a4a" fill-opacity="1"/>
<polygon points="1535.3,324 1546,335.5 1520.3,347" fill="#4a5656" fill-opacity="1"/>
<polygon points="1611.5,312.5 1631,307.2 1631,320.5" fill="#5a6565" fill-opacity="1"/>
<polygon points="1272.2,313.4 1298.7,305.4 1298.7,321.3" fill="#4a4a4a" fill-opacity="1"/>
<polygon points="1251,327.5 1277.5,324.9 1274.8,340.8" fill="#4a5656" fill-opacity="1"/>
<polygon points="1321.7,378 1346.5,392.2 1334.1,401.9" fill="#4a5656" fill-opacity="1"/>
<polygon points="1380.7,379 1397.2,366.3 1389,390.3" fill="#4a4a58" fill-opacity="1"/>
<polygon points="1400.7,721.3 1427.5,717.8 1407,735.6" fill="#4d4f5a" fill-opacity="1"/>
<polygon points="1352.7,480.6 1355,462 1363,480.6" fill="#4a5656" fill-opacity="1"/>
<polygon points="1360,480.6 1366.9,462 1368,480.6" fill="#4a4a58" fill-opacity="1"/>
<polygon points="1367.8,791 1375,782 1372,791" fill="#4a4a58" fill-opacity="1"/>
<polygon points="1298.2,229 1321,236.7 1298.2,241.7" fill="#808080" fill-opacity="0.35"/>
<polygon points="1286.8,244.3 1305.8,263.2 1281.7,255.6" fill="#a0a0a0" fill-opacity="0.3"/>
<polygon points="1374.4,300.5 1382,324.5 1364.2,308" fill="#a0a0a0" fill-opacity="0.3"/>
<polygon points="1387,313 1411,306.8 1407.2,318.2" fill="#808080" fill-opacity="0.35"/>
<polygon points="1415.5,389 1430,387.2 1427,413.1" fill="#a0a0a0" fill-opacity="0.3"/>
<polygon points="1461,391.6 1473.7,396 1459.8,418.2" fill="#a0a0a0" fill-opacity="0.3"/>
<polygon points="1431,552 1445,548.6 1440,570" fill="#c0c0c0" fill-opacity="0.35"/>
<polygon points="1443.7,630.8 1456,622 1461.4,643.2" fill="#c0c0c0" fill-opacity="0.35"/>
<polygon points="1485.4,685.7 1512.2,692.8 1487.2,700" fill="#c0c0c0" fill-opacity="0.3"/>
<polygon points="1499.7,673.2 1524.7,682.1 1499.7,687.4" fill="#c0c0c0" fill-opacity="0.3"/>
<polygon points="1195,218 1215,228 1195,238" fill="#a0a0a0" fill-opacity="0.3"/>
<path d="M797.0 196.3 C864.7 196.0 932.3 195.5 1000.0 195.4 C1067.7 195.3 1187.2 194.2 1203.0 195.5 C1218.8 196.8 1236.4 200.4 1250.0 203.0 C1263.6 205.6 1277.4 207.8 1290.6 212.0 C1303.8 216.2 1327.4 226.0 1341.0 233.5 C1354.6 241.0 1367.4 250.1 1379.4 260.0 C1391.4 269.9 1408.5 284.3 1420.0 299.2 C1431.5 314.1 1443.6 337.6 1450.5 352.8 C1457.4 368.0 1463.1 383.8 1467.0 400.0 C1470.9 416.2 1473.8 446.7 1475.0 460.0 C1476.2 473.3 1476.5 486.7 1477.0 500.0 C1477.5 513.3 1477.7 532.0 1478.0 548.0 L1489 601.7 L1511.7 622.5 L1536.4 632 L1566 635 L1620 638 L1872 641.5" fill="none" stroke="#0a96d6" stroke-width="8" stroke-linejoin="round"/>
<path d="M797.0 274.7 C864.7 274.6 933.3 274.4 1000.0 274.5 C1066.7 274.6 1183.0 274.2 1200.0 275.4 C1217.0 276.6 1237.5 278.8 1250.6 282.1 C1263.7 285.4 1276.3 290.9 1288.5 296.7 C1300.7 302.5 1315.1 309.0 1326.4 318.1 C1337.7 327.2 1348.6 341.5 1357.0 352.0 C1365.4 362.5 1376.2 377.1 1380.2 385.0 C1384.2 392.9 1386.8 401.4 1389.0 410.0 C1391.2 418.6 1392.7 431.7 1393.8 440.0 C1394.9 448.3 1395.8 456.7 1396.5 465.0 C1397.2 473.3 1398.5 488.3 1399.0 500.0 C1399.5 511.7 1399.2 540.0 1399.5 560.0 C1399.8 580.0 1400.4 611.6 1401.0 620.0 C1401.6 628.4 1403.0 636.7 1404.0 645.0 L1408.8 669.6 L1424.8 700 L1446.2 719.5 L1478.3 732 L1514 737.4 L1549.6 739.2 L1620 739.5 L1872 744.6" fill="none" stroke="#0a96d6" stroke-width="8" stroke-linejoin="round"/>
<path d="M797.0 196.3 C864.7 196.0 932.3 195.5 1000.0 195.4 C1067.7 195.3 1187.2 194.2 1203.0 195.5 C1218.8 196.8 1236.4 200.4 1250.0 203.0 C1263.6 205.6 1277.4 207.8 1290.6 212.0 C1303.8 216.2 1327.4 226.0 1341.0 233.5 C1354.6 241.0 1367.4 250.1 1379.4 260.0 C1391.4 269.9 1408.5 284.3 1420.0 299.2 C1431.5 314.1 1443.6 337.6 1450.5 352.8 C1457.4 368.0 1463.1 383.8 1467.0 400.0 C1470.9 416.2 1473.8 446.7 1475.0 460.0 C1476.2 473.3 1476.5 486.7 1477.0 500.0 C1477.5 513.3 1477.7 532.0 1478.0 548.0 L1489 601.7 L1511.7 622.5 L1536.4 632 L1566 635 L1620 638 L1872 641.5" fill="none" stroke="#848484" stroke-width="3" stroke-linejoin="round"/>
<path d="M797.0 274.7 C864.7 274.6 933.3 274.4 1000.0 274.5 C1066.7 274.6 1183.0 274.2 1200.0 275.4 C1217.0 276.6 1237.5 278.8 1250.6 282.1 C1263.7 285.4 1276.3 290.9 1288.5 296.7 C1300.7 302.5 1315.1 309.0 1326.4 318.1 C1337.7 327.2 1348.6 341.5 1357.0 352.0 C1365.4 362.5 1376.2 377.1 1380.2 385.0 C1384.2 392.9 1386.8 401.4 1389.0 410.0 C1391.2 418.6 1392.7 431.7 1393.8 440.0 C1394.9 448.3 1395.8 456.7 1396.5 465.0 C1397.2 473.3 1398.5 488.3 1399.0 500.0 C1399.5 511.7 1399.2 540.0 1399.5 560.0 C1399.8 580.0 1400.4 611.6 1401.0 620.0 C1401.6 628.4 1403.0 636.7 1404.0 645.0 L1408.8 669.6 L1424.8 700 L1446.2 719.5 L1478.3 732 L1514 737.4 L1549.6 739.2 L1620 739.5 L1872 744.6" fill="none" stroke="#848484" stroke-width="3" stroke-linejoin="round"/>
<path d="M740.0 196.0 C1117.3 195.4 1494.7 194.9 1872.0 194.3" fill="none" stroke="#848484" stroke-width="2.4"/>
<path d="M740.0 275.0 C1117.3 274.3 1494.7 273.7 1872.0 273.0" fill="none" stroke="#848484" stroke-width="2.4"/>
<path d="M740.0 353.5 C1117.3 353.2 1494.7 352.8 1872.0 352.5" fill="none" stroke="#848484" stroke-width="2.4"/>
<path d="M1660.0 194.8 C1648.3 195.2 1636.5 195.2 1624.8 196.0 C1613.1 196.8 1589.2 198.7 1571.6 201.3 C1554.0 203.9 1535.7 206.4 1518.5 212.0 C1501.3 217.6 1481.5 227.3 1465.4 236.8 C1449.3 246.3 1427.8 263.4 1420.0 270.0 C1412.2 276.6 1404.6 283.5 1397.9 291.2 C1391.2 298.9 1369.0 330.5 1362.5 340.8 C1356.0 351.1 1349.9 361.7 1344.8 372.7 C1339.7 383.7 1333.0 401.7 1330.6 410.0 C1328.2 418.3 1326.9 426.9 1325.3 435.4 C1323.7 443.9 1321.1 456.6 1320.3 467.3 C1319.5 478.0 1320.3 502.4 1320.3 520.0 C1320.3 537.6 1320.3 700.7 1320.3 791.0" fill="none" stroke="#848484" stroke-width="2.4"/>
<path d="M1660.0 273.8 C1642.3 274.6 1624.5 273.9 1607.0 276.2 C1589.5 278.5 1571.2 282.2 1554.0 287.7 C1536.8 293.2 1517.3 300.7 1500.8 310.7 C1484.3 320.7 1462.8 337.8 1450.5 351.5 C1438.2 365.2 1425.2 389.9 1420.6 398.0 C1416.0 406.1 1411.1 414.2 1408.0 423.0 C1404.9 431.8 1401.5 450.1 1400.3 460.0 C1399.1 469.9 1399.2 480.0 1399.0 490.0 C1398.8 500.0 1399.0 690.7 1399.0 791.0" fill="none" stroke="#848484" stroke-width="2.4"/>
<path d="M1630.0 352.8 C1619.3 352.9 1605.0 352.7 1598.0 353.0 C1591.0 353.3 1584.0 353.6 1577.2 354.8 C1570.3 356.0 1563.5 357.9 1557.0 360.2 C1550.4 362.6 1544.0 365.6 1538.0 369.1 C1532.0 372.6 1526.2 376.6 1520.9 381.1 C1515.5 385.6 1510.6 390.5 1506.1 395.9 C1501.6 401.2 1497.6 407.0 1494.1 413.0 C1490.6 419.0 1487.6 425.4 1485.2 432.0 C1482.9 438.5 1481.0 445.3 1479.8 452.2 C1478.6 459.0 1478.3 466.0 1478.0 473.0 C1477.7 480.0 1478.0 504.3 1478.0 520.0 C1478.0 535.7 1477.3 700.7 1477.0 791.0" fill="none" stroke="#848484" stroke-width="2.4"/>
<path d="M1160.0 353.6 C1171.3 353.7 1182.7 352.9 1194.0 354.0 C1205.3 355.1 1225.9 357.8 1238.5 362.0 C1251.1 366.2 1263.4 371.9 1274.0 379.8 C1284.6 387.7 1295.3 399.6 1302.3 410.0 C1309.3 420.4 1316.2 436.9 1318.2 444.3 C1320.2 451.7 1320.0 459.7 1320.3 467.3 C1320.6 474.9 1320.3 482.4 1320.3 490.0" fill="none" stroke="#848484" stroke-width="2.4"/>
<path d="M1326.7 791.0 C1327.9 782.0 1327.9 772.8 1330.3 764.0 C1332.7 755.2 1341.8 730.9 1348.0 721.3 C1354.2 711.7 1362.7 703.9 1371.3 696.4 C1379.9 688.9 1395.5 678.6 1407.0 671.4 C1418.5 664.2 1430.0 656.5 1442.7 651.8 C1455.4 647.1 1492.8 639.5 1511.0 637.4 C1529.2 635.3 1554.7 635.9 1566.0 636.0 C1577.3 636.1 1588.7 637.0 1600.0 637.5" fill="none" stroke="#848484" stroke-width="2.4"/>
<path d="M1403.4 791.0 C1407.6 784.4 1410.4 776.7 1416.0 771.3 C1421.6 765.9 1433.2 759.4 1442.7 755.2 C1452.2 751.0 1466.1 746.8 1478.3 744.5 C1490.5 742.2 1532.8 739.8 1549.6 739.2 C1566.4 738.6 1583.2 739.2 1600.0 739.2" fill="none" stroke="#848484" stroke-width="2.4"/>
<path d="M1740.0 639.2 C1747.2 639.5 1754.5 639.1 1761.6 640.0 C1768.7 640.9 1800.2 647.8 1812.0 651.6 C1823.8 655.4 1837.3 660.6 1846.5 665.7 C1855.7 670.8 1863.5 677.9 1872.0 684.0" fill="none" stroke="#848484" stroke-width="2.4"/>
<path d="M1730.0 742.6 C1737.6 742.8 1745.2 742.3 1752.8 743.2 C1760.4 744.1 1807.6 752.9 1816.6 756.5 C1825.6 760.1 1834.3 765.9 1841.5 771.6 C1848.7 777.3 1854.5 784.5 1861.0 791.0" fill="none" stroke="#848484" stroke-width="2.4"/>
<rect x="1179" y="199" width="13" height="74" fill="#848484"/>
<polygon points="1630,273 1643.5,273 1644.5,352.5 1631,352.5" fill="#848484"/>
<rect x="1323.5" y="481" width="76" height="13" fill="#848484"/>
<path d="M1068 206 H1145 Q1178 207 1178 231.5 Q1178 256 1145 257 H1068 Q1051 256 1051 231.5 Q1051 207 1068 206Z" fill="#f2f2f2" fill-opacity="0.42" stroke="#909090" stroke-opacity="0.85" stroke-width="1.3"/>
<path d="M1069 209 H1144 Q1174 210 1174 231.5 Q1174 253 1144 254 H1069 Q1055 253 1055 231.5 Q1055 210 1069 209Z" fill="none" stroke="#505050" stroke-opacity="0.45" stroke-width="2.2"/>
<path d="M1056 215 Q1062 211 1068 213 V250 Q1062 252 1056 248Z" fill="#000" fill-opacity="0.2"/>
<path d="M1122 213 Q1138 213 1146 217 V246 Q1138 250 1122 250Z" fill="#000" fill-opacity="0.22"/>
<path d="M833.7,210.9 L963.7,209.2 L964.3,259.2 L834.3,260.9Z M860.2,210.5 L990.1,208.8 L990.8,258.8 L860.8,260.5Z M886.7,210.2 L1016.6,208.4 L1017.3,258.4 L887.3,260.2Z M913.2,209.8 L1043.2,208.1 L1043.8,258.1 L913.8,259.8Z M939.7,209.4 L1069.7,208.0 L1070.3,258.0 L940.3,259.4Z M966.3,209.1 L1096.3,208.2 L1096.7,258.2 L966.7,259.1Z M992.9,208.8 L1122.9,208.5 L1123.1,258.5 L993.1,258.8Z M1019.5,208.7 L1149.5,208.8 L1149.5,258.8 L1019.5,258.7Z M1046.1,208.6 L1176.1,209.4 L1175.8,259.4 L1045.8,258.6Z M1072.8,208.7 L1202.8,210.2 L1202.2,260.2 L1072.2,258.7Z M1099.4,208.9 L1229.4,211.0 L1228.6,261.0 L1098.6,258.9Z M1126.2,209.2 L1256.1,212.6 L1254.8,262.6 L1124.8,259.1Z M1153.5,209.3 L1283.2,216.8 L1280.3,266.8 L1150.6,259.2Z M1181.3,210.1 L1310.5,224.5 L1305.0,274.2 L1175.8,259.8Z M1209.0,212.5 L1337.3,233.4 L1329.3,282.7 L1201.0,261.8Z M1236.7,216.1 L1363.7,243.9 L1353.0,292.7 L1226.0,264.9Z M1265.6,220.6 L1389.0,261.6 L1373.2,309.1 L1249.8,268.1Z M1294.8,228.3 L1411.3,286.0 L1389.1,330.8 L1272.6,273.1Z M1321.4,240.1 L1431.7,308.8 L1405.3,351.3 L1294.9,282.5Z M1346.8,254.1 L1450.1,333.0 L1419.8,372.7 L1316.4,293.9Z M1372.4,270.8 L1462.6,364.5 L1426.5,399.2 L1336.4,305.5Z M1395.3,291.6 L1469.1,398.6 L1427.9,427.0 L1354.2,319.9Z M1413.9,315.3 L1472.5,431.4 L1427.8,453.9 L1369.3,337.8Z M1428.5,340.9 L1473.7,462.8 L1426.8,480.2 L1381.6,358.3Z M1439.4,367.2 L1475.2,492.1 L1427.2,505.9 L1391.3,381.0Z M1448.6,394.4 L1473.5,522.0 L1424.4,531.6 L1399.5,404.0Z M1455.0,422.3 L1469.8,551.4 L1420.1,557.1 L1405.4,427.9Z M1458.5,449.3 L1469.3,578.9 L1419.4,583.0 L1408.6,453.5Z M1461.0,476.1 L1469.7,605.8 L1419.8,609.2 L1411.1,479.5Z M1463.1,503.0 L1469.2,632.9 L1419.3,635.2 L1413.2,505.4Z M1464.7,530.0 L1468.2,659.9 L1418.2,661.3 L1414.7,531.3Z M1464.9,556.1 L1470.2,686.0 L1420.3,688.1 L1414.9,558.2Z M1462.5,579.2 L1487.5,706.8 L1438.4,716.4 L1413.4,588.8Z M1459.7,599.8 L1524.0,712.8 L1480.6,737.5 L1416.3,624.5Z M1464.2,619.7 L1561.1,706.3 L1527.8,743.6 L1430.9,657.0Z M1476.2,637.2 L1592.6,695.1 L1570.4,739.8 L1454.0,682.0Z M1492.5,650.7 L1620.0,676.0 L1610.3,725.1 L1482.8,699.8Z M1514.8,657.0 L1644.7,664.1 L1641.9,714.1 L1512.1,706.9Z M1541.2,658.3 L1671.0,664.7 L1668.6,714.7 L1538.7,708.3Z M1567.7,659.7 L1697.5,666.5 L1694.9,716.4 L1565.1,709.6Z M1593.8,661.3 L1723.7,666.3 L1721.8,716.3 L1591.9,711.3Z M1619.9,662.5 L1749.9,665.6 L1748.7,715.6 L1618.7,712.5Z M1646.2,663.2 L1776.2,665.4 L1775.4,715.4 L1645.4,713.2Z M1672.7,663.7 L1802.7,665.6 L1801.9,715.6 L1672.0,713.7Z M1699.2,664.1 L1829.2,665.9 L1828.5,715.9 L1698.5,714.1Z M1725.7,664.5 L1855.6,666.2 L1855.0,716.2 L1725.0,714.5Z M1752.2,664.8 L1882.1,666.6 L1881.5,716.6 L1751.5,714.8Z M1778.7,665.2 L1908.6,667.0 L1908.0,717.0 L1778.0,715.2Z M1805.2,665.5 L1935.1,667.4 L1934.4,717.4 L1804.5,715.5Z M1831.7,665.9 L1961.7,667.8 L1960.9,717.8 L1830.9,715.9Z" fill="none" stroke="#e0e02c" stroke-width="1.0"/>
<polygon points="1499.5,591.5 1566.3,597.5 1567.8,791 1499.7,791" fill="#42504a" fill-opacity="0.5"/>
</svg>
</div>
</body></html>
